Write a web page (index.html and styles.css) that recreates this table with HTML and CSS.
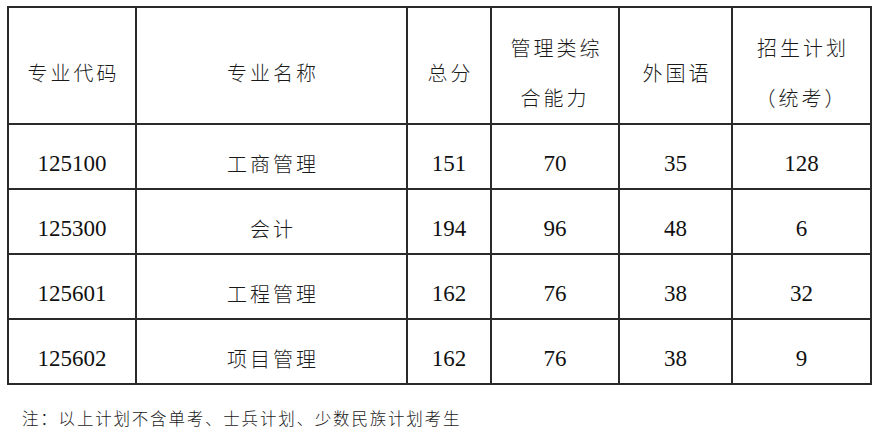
FILE: index.html
```html
<!DOCTYPE html>
<html lang="zh">
<head>
<meta charset="utf-8">
<link rel="stylesheet" href="styles.css">
</head>
<body>
<table class="plan">
  <colgroup>
    <col class="c1"><col class="c2"><col class="c3"><col class="c4"><col class="c5"><col class="c6">
  </colgroup>
  <thead>
    <tr class="head">
      <th>专业代码</th>
      <th>专业名称</th>
      <th>总分</th>
      <th class="two">管理类综<br>合能力</th>
      <th>外国语</th>
      <th class="two">招生计划<br>（统考）</th>
    </tr>
  </thead>
  <tbody>
    <tr><td class="num">125100</td><td>工商管理</td><td class="num">151</td><td class="num">70</td><td class="num">35</td><td class="num">128</td></tr>
    <tr><td class="num">125300</td><td>会计</td><td class="num">194</td><td class="num">96</td><td class="num">48</td><td class="num">6</td></tr>
    <tr><td class="num">125601</td><td>工程管理</td><td class="num">162</td><td class="num">76</td><td class="num">38</td><td class="num">32</td></tr>
    <tr><td class="num">125602</td><td>项目管理</td><td class="num">162</td><td class="num">76</td><td class="num">38</td><td class="num">9</td></tr>
  </tbody>
</table>
<p class="note">注：以上计划不含单考、士兵计划、少数民族计划考生</p>
</body>
</html>
```
FILE: styles.css
```css
html, body {
  margin: 0;
  padding: 0;
  background: #fff;
}
body {
  font-family: "Noto Sans CJK SC", "Noto Sans", sans-serif;
  color: #1a1a1a;
}
.plan {
  border-collapse: collapse;
  table-layout: fixed;
  width: 863px;
  margin: 6px 0 0 7px;
}
.c1 { width: 128px; }
.c2 { width: 271px; }
.c3 { width: 84px; }
.c4 { width: 128px; }
.c5 { width: 113px; }
.c6 { width: 139px; }
.plan th, .plan td {
  border: 2px solid #2a2a2a;
  text-align: center;
  vertical-align: middle;
  padding: 14px 0 0 0;
  font-weight: 300;
  font-size: 20px;
  letter-spacing: 3px;
  text-indent: 3px;
}
.plan .head th {
  height: 101px;
  line-height: 50px;
}
.plan tbody td {
  height: 49px;
  line-height: 28px;
}
.plan td.num {
  font-family: "Liberation Serif", "Times New Roman", serif;
  font-weight: 400;
  font-size: 23px;
  letter-spacing: 0;
  text-indent: 0;
  color: #111;
}
.note {
  margin: 21px 0 0 22px;
  font-size: 16.5px;
  font-weight: 300;
  letter-spacing: 1.8px;
  line-height: 24px;
}
```
